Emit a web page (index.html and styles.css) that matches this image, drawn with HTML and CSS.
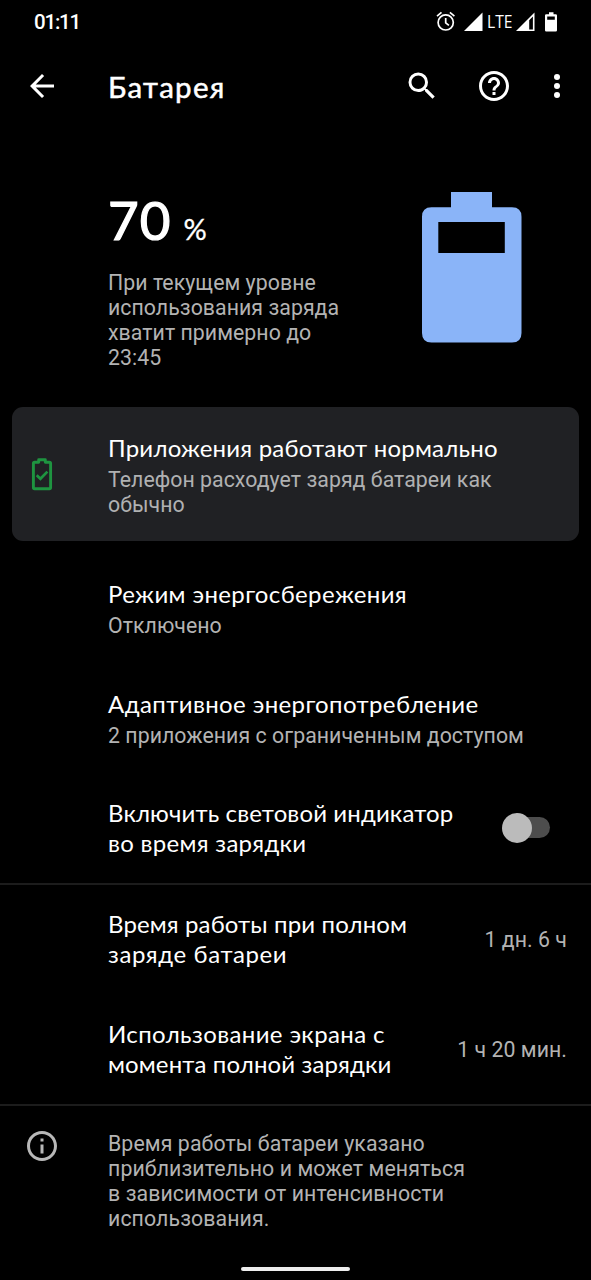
FILE: index.html
```html
<!DOCTYPE html>
<html lang="ru">
<head>
<meta charset="utf-8">
<title>Батарея</title>
<link rel="stylesheet" href="styles.css">
</head>
<body>
<div class="screen">
  <header class="status">
    <span class="clock">01:11</span>
    <svg class="status-icons" width="126" height="24" viewBox="0 0 126 24" fill="none">
      <g stroke="#fff" stroke-width="1.7">
        <circle cx="9.7" cy="12.4" r="7.6"/>
        <path d="M9.7 8v4.8l3.2 2.6M1 6.2l4.5-3.8M18.400 6.200l-4.500-3.800"/>
      </g>
      <path d="M28 21h18.500V2.500z" fill="#fff"/>
      <text class="lte" x="51" y="18.300" textLength="25.500" lengthAdjust="spacingAndGlyphs">LTE</text>
      <path fill="#fff" fill-rule="evenodd" d="M80 21h18.500V2.500zM93.200 10.200l3.700-3.700v13h-3.700z"/>
      <path fill="#fff" fill-rule="evenodd" d="M113 2.300h4.500v1.900h2.200q1.300 0 1.300 1.300v14.700q0 1.300-1.300 1.300h-9.400q-1.300 0-1.300-1.300V5.500q0-1.300 1.300-1.300h2.700zM111.200 6.500v3.200h7.600V6.500z"/>
    </svg>
  </header>
  <nav class="appbar">
    <svg class="back" width="36" height="36" viewBox="0 0 24 24" fill="#fff"><path d="M20 11H7.830l5.590-5.590L12 4l-8 8 8 8 1.410-1.410L7.830 13H20z"/></svg>
    <h1 class="title">Батарея</h1>
    <div class="actions">
      <svg width="36" height="36" viewBox="0 0 24 24" fill="#fff"><path d="M15.500 14h-.79l-.28-.27A6.470 6.470 0 0 0 16 9.500 6.500 6.500 0 1 0 9.500 16c1.610 0 3.090-.59 4.230-1.570l.27.28v.79l5 4.990L20.490 19zm-6 0C7.010 14 5 11.990 5 9.500S7.010 5 9.500 5 14 7.010 14 9.500 11.990 14 9.500 14z"/></svg>
      <svg width="36" height="36" viewBox="0 0 24 24" fill="#fff"><path d="M11 18h2v-2h-2zm1-16C6.480 2 2 6.480 2 12s4.480 10 10 10 10-4.480 10-10S17.520 2 12 2zm0 18c-4.410 0-8-3.590-8-8s3.590-8 8-8 8 3.590 8 8-3.590 8-8 8zm0-14c-2.210 0-4 1.790-4 4h2c0-1.100.9-2 2-2s2 .9 2 2c0 2-3 1.750-3 5h2c0-2.250 3-2.500 3-5 0-2.210-1.790-4-4-4z"/></svg>
      <svg class="more" width="36" height="36" viewBox="0 0 24 24" fill="#fff"><circle cx="12" cy="6" r="2"/><circle cx="12" cy="12" r="2"/><circle cx="12" cy="18" r="2"/></svg>
    </div>
  </nav>
  <section class="summary">
    <div>
      <div class="level"><span class="level-number">70</span><span class="level-unit">%</span></div>
      <p class="sub">При текущем уровне<br>использования заряда<br>хватит примерно до<br>23:45</p>
    </div>
    <svg class="battery" width="100" height="151" viewBox="0 0 100 151"><path fill="#8ab4f8" fill-rule="evenodd" d="M29 0h41v15.300h20q9.500 0 9.500 9.500V141q0 9.500-9.500 9.500H9.500Q0 150.500 0 141V24.800q0-9.500 9.500-9.500H29zM16.300 30v31h66.500V30z"/></svg>
  </section>
  <section class="card">
    <svg class="card-icon" width="36" height="36" viewBox="0 0 36 36" fill="none" stroke="#1e9440">
      <path stroke-width="2.900" stroke-linejoin="round" d="M14.700 6.300V3.800h6.600v2.500h4.100q1.200 0 1.200 1.200v24q0 1.200-1.200 1.200H10.600q-1.200 0-1.200-1.200v-24q0-1.200 1.200-1.200z"/>
      <path stroke-width="2.700" d="M12.700 19.300l3.700 3.500 7-7.200"/>
    </svg>
    <div>
      <h2 class="name"><span class="track-2">Приложения работают нормально</span></h2>
      <p class="sub">Телефон расходует заряд батареи как<br>обычно</p>
    </div>
  </section>
  <section class="row row-saver">
    <h2 class="name"><span class="track-4">Режим энергосбережения</span></h2>
    <p class="sub">Отключено</p>
  </section>
  <section class="row row-adaptive">
    <h2 class="name"><span class="track-4">Адаптивное энергопотребление</span></h2>
    <p class="sub">2 приложения с ограниченным доступом</p>
  </section>
  <section class="row split row-led">
    <h2 class="name"><span class="track-1">Включить световой индикатор</span><br><span class="track-3">во время зарядки</span></h2>
    <div class="switch"><div class="thumb"></div></div>
  </section>
  <section class="row split ruled">
    <h2 class="name"><span class="track-1">Время работы при полном</span><br><span class="track-6">заряде батареи</span></h2>
    <span class="sub value">1 дн. 6 ч</span>
  </section>
  <section class="row split row-usage">
    <h2 class="name"><span class="track-4">Использование экрана с</span><br><span class="track-1">момента полной зарядки</span></h2>
    <span class="sub value">1 ч 20 мин.</span>
  </section>
  <footer class="note">
    <svg width="36" height="36" viewBox="0 0 24 24" fill="#b8b8b8"><path d="M11 7h2v2h-2zm0 4h2v6h-2zm1-9C6.480 2 2 6.480 2 12s4.480 10 10 10 10-4.480 10-10S17.520 2 12 2zm0 18c-4.410 0-8-3.590-8-8s3.590-8 8-8 8 3.590 8 8-3.590 8-8 8z"/></svg>
    <p class="sub">Время работы батареи указано<br>приблизительно и может меняться<br>в зависимости от интенсивности<br>использования.</p>
  </footer>
  <div class="home"></div>
</div>
</body>
</html>
```
FILE: styles.css
```css
* { box-sizing: border-box; margin: 0; padding: 0; }
body { background: #000; color: #fff; font-family: Lato, sans-serif; }
svg { display: block; flex: none; }
.screen { width: 591px; height: 1280px; display: flex; flex-direction: column; overflow: hidden; background: #000; }
.status { height: 44px; flex: none; display: flex; justify-content: space-between; padding: 10px 29px 0 34px; }
.clock { font-family: Roboto, sans-serif; font-size: 20.5px; font-weight: 500; line-height: 25px; letter-spacing: -1.2px; white-space: nowrap; }
.lte { font: 17.500px "Open Sans", sans-serif; fill: #fff; }
.appbar { height: 84px; flex: none; display: flex; align-items: center; padding: 0 16px 0 24px; }
.title { margin-left: 48px; padding-top: 1px; font-size: 29.5px; font-weight: 400; line-height: 36px; letter-spacing: 1.3px; -webkit-text-stroke: .5px #fff; white-space: nowrap; }
.actions { display: flex; gap: 36px; margin-left: auto; }
.more { margin-left: -9px; }
.summary { height: 279px; flex: none; display: flex; justify-content: space-between; align-items: flex-start; padding: 64px 69px 0 108px; }
.level { height: 78px; display: flex; align-items: baseline; gap: 12px; line-height: 56px; }
.level-number { font-size: 53px; font-weight: 400; letter-spacing: 1px; -webkit-text-stroke: 1.2px #fff; }
.level-unit { font-size: 29px; font-weight: 400; -webkit-text-stroke: .3px #fff; }
.sub { font-family: Roboto, sans-serif; font-size: 21.3px; line-height: 25px; letter-spacing: .04px; color: #b3b3b3; white-space: nowrap; }
.name { font-size: 24px; font-weight: 400; line-height: 30px; white-space: nowrap; margin-top: -1.5px; }
.track-1 { letter-spacing: .13px; }
.track-2 { letter-spacing: .22px; }
.track-3 { letter-spacing: .3px; }
.track-4 { letter-spacing: .38px; }
.track-6 { letter-spacing: .6px; }
.card { height: 134px; flex: none; margin: 0 12px; padding: 27px 0 0 12px; display: flex; gap: 48px; border-radius: 11px; background: #202124; }
.card-icon { margin-top: 22px; }
.card .sub { color: #b0b1b2; padding-top: 4px; }
.row { flex: none; padding-left: 108px; }
.row .sub { padding-top: 4px; }
.row-saver { height: 110px; margin-top: 39px; }
.row-adaptive { height: 110px; }
.split { display: flex; justify-content: space-between; align-items: flex-start; padding-right: 24px; }
.split .name { margin-top: -2.5px; }
.row-led { height: 83px; padding-right: 41px; }
.switch { width: 48px; height: 30px; margin-top: 13px; position: relative; }
.switch::before { content: ""; position: absolute; left: 6px; right: 0; top: 4px; bottom: 5px; border-radius: 11px; background: #4d4d4d; }
.thumb { position: relative; width: 30px; height: 30px; border-radius: 50%; background: #bbb; }
.ruled { height: 138px; border-top: 2px solid #1c1c1c; padding-top: 26px; }
.split .value { padding-top: 16px; }
.row-usage { height: 83px; }
.note { height: 163px; flex: none; display: flex; gap: 48px; padding: 23px 24px 0; border-top: 2px solid #1c1c1c; }
.note .sub { padding-top: 2px; letter-spacing: .09px; }
.note svg { margin-top: -1px; }
.home { width: 109px; height: 4px; margin: 0 auto; border-radius: 2px; background: #eee; }
```
